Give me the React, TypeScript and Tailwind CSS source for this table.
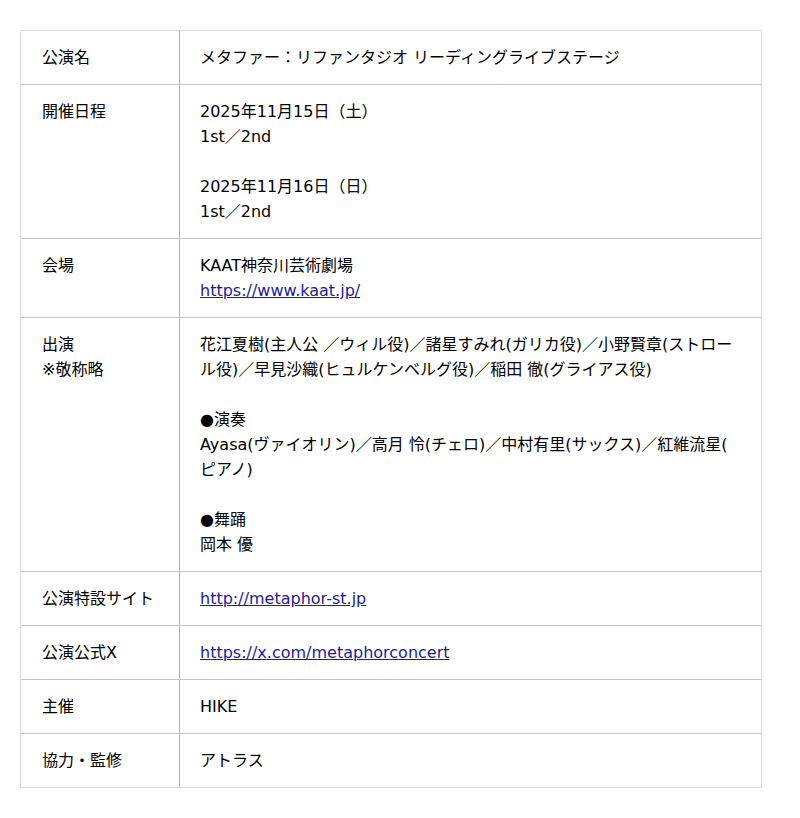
import React from "react";

type Row = {
  label: React.ReactNode;
  content: React.ReactNode;
};

const linkCls = "text-[#1a1aa6] underline";

const rows: Row[] = [
  { label: "公演名", content: "メタファー：リファンタジオ リーディングライブステージ" },
  {
    label: "開催日程",
    content: (
      <>
        2025年11月15日（土）
        <br />
        1st／2nd
        <br />
        <br />
        2025年11月16日（日）
        <br />
        1st／2nd
      </>
    ),
  },
  {
    label: "会場",
    content: (
      <>
        KAAT神奈川芸術劇場
        <br />
        <a href="#" className={linkCls}>
          https://www.kaat.jp/
        </a>
      </>
    ),
  },
  {
    label: (
      <>
        出演
        <br />
        ※敬称略
      </>
    ),
    content: (
      <>
        花江夏樹(主人公 ／ウィル役)／諸星すみれ(ガリカ役)／小野賢章(ストロー
        <br />
        ル役)／早見沙織(ヒュルケンベルグ役)／稲田 徹(グライアス役)
        <br />
        <br />
        ●演奏
        <br />
        Ayasa(ヴァイオリン)／高月 怜(チェロ)／中村有里(サックス)／紅維流星(
        <br />
        ピアノ)
        <br />
        <br />
        ●舞踊
        <br />
        岡本 優
      </>
    ),
  },
  {
    label: "公演特設サイト",
    content: (
      <a href="#" className={linkCls}>
        http://metaphor-st.jp
      </a>
    ),
  },
  {
    label: "公演公式X",
    content: (
      <a href="#" className={linkCls}>
        https://x.com/metaphorconcert
      </a>
    ),
  },
  { label: "主催", content: "HIKE" },
  { label: "協力・監修", content: "アトラス" },
];

export default function App() {
  return (
    <div
      className="min-h-screen bg-white pt-[30px] pl-[20px] text-[16px] leading-[25px] text-black"
      style={{ fontFamily: '"DejaVu Sans", "Noto Sans CJK JP", sans-serif' }}
    >
      <div className="w-[742px] border border-[#dddddd]">
        {rows.map((row, i) => (
          <div
            key={i}
            className={`flex ${i > 0 ? "border-t border-[#c4c4c4]" : ""}`}
          >
            <div className="w-[159px] shrink-0 border-r border-[#b0b0b0] py-[14px] pl-[21px] pr-[10px] whitespace-nowrap">
              {row.label}
            </div>
            <div className="flex-1 py-[14px] pl-[20px] pr-[10px] whitespace-nowrap">
              {row.content}
            </div>
          </div>
        ))}
      </div>
    </div>
  );
}
